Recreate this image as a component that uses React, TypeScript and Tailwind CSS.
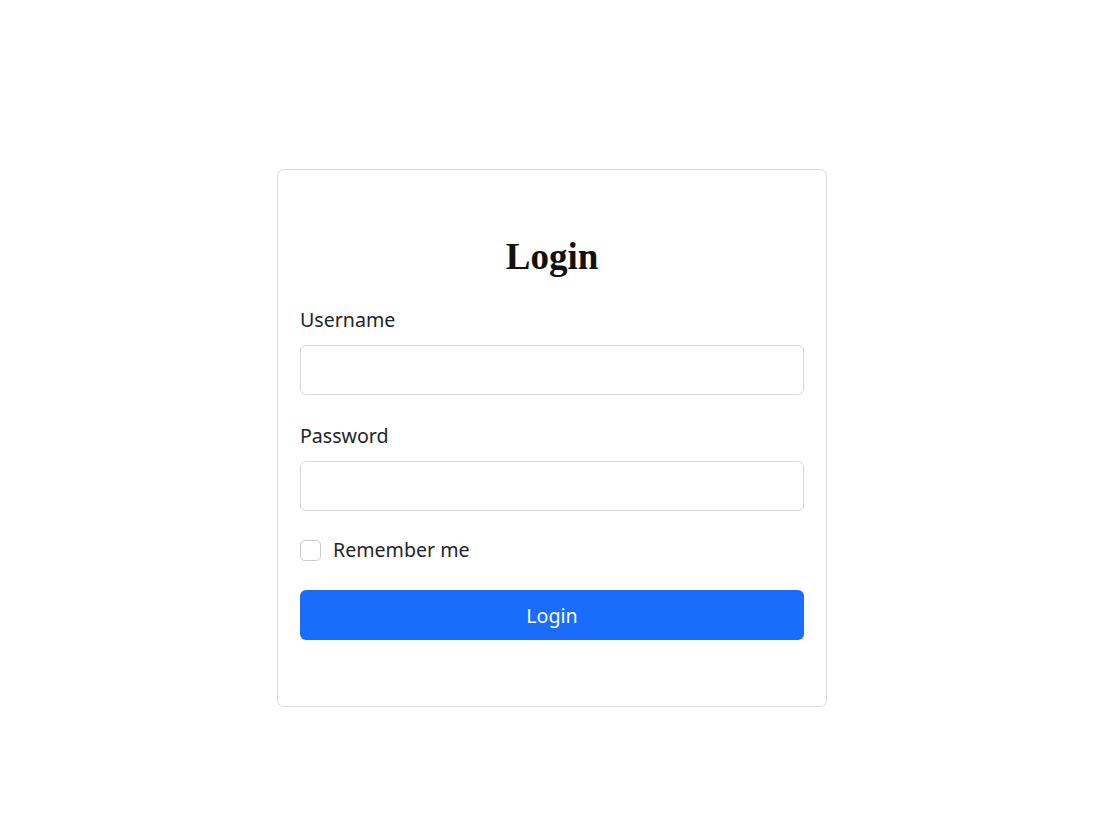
import React from "react";

export default function App() {
  return (
    <div className="min-h-screen bg-white flex justify-center pl-[4px]" style={{ fontFamily: '"Noto Sans", "Open Sans", sans-serif' }}>
      <div className="w-[550px] mt-[169px] mb-[118px] border border-[#d9d9de] rounded-[7px] px-[22px] pt-[65px] pb-[66px] h-fit">
        <h2 className="text-center text-[37px] leading-[44px] font-bold text-[#111] mb-[26px]" style={{ fontFamily: '"Liberation Serif", "Times New Roman", serif' }}>
          Login
        </h2>
        <label className="block text-[19.6px] leading-[30px] text-[#212529] mb-[10px]">Username</label>
        <input type="text" className="block w-full h-[50px] border border-[#d5d8dc] rounded-[6px] px-3 text-[19px] outline-none mb-[26px]" />
        <label className="block text-[19.6px] leading-[30px] text-[#212529] mb-[10px]">Password</label>
        <input type="password" className="block w-full h-[50px] border border-[#d5d8dc] rounded-[6px] px-3 text-[19px] outline-none mb-[27px]" />
        <div className="flex items-center gap-[12px] mb-[28px]">
          <span className="w-[21px] h-[21px] border border-[#c9ccd0] rounded-[5px] bg-white" />
          <span className="text-[19.6px] leading-[24px] text-[#212529]">Remember me</span>
        </div>
        <button className="block w-full h-[50px] bg-[#1a6dfa] rounded-[6px] text-white text-[19.6px] leading-[52px]">Login</button>
      </div>
    </div>
  );
}
